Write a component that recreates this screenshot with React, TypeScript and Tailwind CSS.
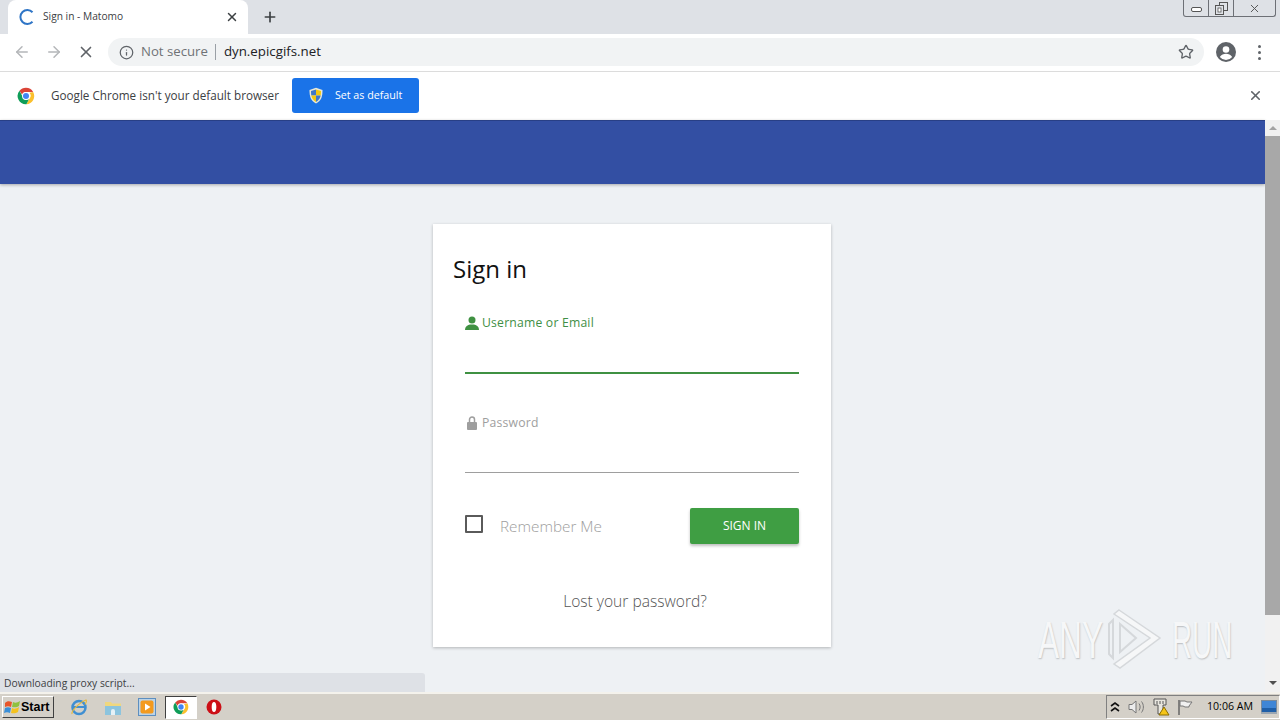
import { ArrowLeft, ArrowRight, X, Plus, Info, Star } from 'lucide-react';

function ChromeLogo({ size = 18 }: { size?: number }) {
  return (
    <svg width={size} height={size} viewBox="0 0 48 48">
      <path d="M24 2a22 22 0 0 1 19.05 11H24a11 11 0 0 0-10.4 7.4L6.6 10.2A22 22 0 0 1 24 2z" fill="#db4437" />
      <path d="M43.05 13A22 22 0 0 1 25 46l8.6-15.6A11 11 0 0 0 33 15.5z" fill="#fbc02d" />
      <path d="M25 46A22 22 0 0 1 6.6 10.2l9.4 17.6a11 11 0 0 0 11 5.8l5-1z" fill="#0f9d58" />
      <circle cx="24" cy="24" r="10.5" fill="#fff" />
      <circle cx="24" cy="24" r="8" fill="#4285f4" />
    </svg>
  );
}

function Shield() {
  return (
    <svg width="16" height="17" viewBox="0 0 16 17">
      <path d="M8 .8 14.5 3c0 6 -.8 10.500 -6.500 13.500C2.300 13.500 1.500 9 1.500 3z" fill="#e8e8d8" />
      <path d="M8 2.500V8.500H3.300C3.100 7 3 5 3 3.900z" fill="#3f78c9" />
      <path d="M8 2.500 13 3.900c0 1.600 -.1 3.200 -.3 4.600H8z" fill="#f2c811" />
      <path d="M3.300 8.500H8V15C5 13 3.800 11 3.300 8.500z" fill="#f2c811" />
      <path d="M8 8.500h4.700C12.200 11 11 13 8 15z" fill="#3f78c9" />
    </svg>
  );
}

function Taskbar() {
  return (
    <div className="flex h-[28px] items-center border-t-2 border-[#f4f2ec] bg-[#d4d0c8]">
      <button className="ml-[2px] flex h-[22px] w-[52px] items-center border border-t-white border-l-white border-r-[#404040] border-b-[#404040] bg-[#d4d0c8] pl-[1px] font-['Liberation_Sans',sans-serif] text-[12.500px] font-bold text-black">
        <svg width="17" height="16" viewBox="0 0 17 16" className="shrink-0">
          <path d="M1 4C3 2 5 2 8 3L7 8C5 7 3 7 1 8z" fill="#e8562a" />
          <path d="M9 3c2 1 4 1 7-1l-1 5c-2 1.500 -4 1.500 -7 1z" fill="#8fc13e" />
          <path d="M1 9c2-1 4-1 6 0l-1 5c-2-1-4-1-6 0z" fill="#3a8fd8" />
          <path d="M8 9c2 1 4 1 7-1l-1 5c-2 1.500 -5 1.500 -7 1z" fill="#f4c21f" />
        </svg>
        Start
      </button>
      <svg width="18" height="18" viewBox="0 0 18 18" className="ml-[16px]">
        <circle cx="9" cy="9.500" r="6.500" fill="none" stroke="#3f8fd2" strokeWidth="2.500" />
        <path d="M3 9h12" stroke="#3f8fd2" strokeWidth="2" />
        <path d="M2 16C1 13 10 4 16 2c1 1 0 3 -1 4.500" fill="none" stroke="#e6b93c" strokeWidth="1.200" />
      </svg>
      <svg width="18" height="18" viewBox="0 0 18 18" className="ml-[16px]">
        <path d="M1 4h6l1 1.500h9V9H1z" fill="#f0d77e" />
        <path d="M1 8h16v9H1z" fill="#8cc4de" />
        <path d="M7 17v-4a2 2 0 0 1 4 0v4z" fill="#e6f1f6" />
      </svg>
      <svg width="18" height="18" viewBox="0 0 18 18" className="ml-[16px]">
        <rect x="0.500" y="0.500" width="17" height="17" fill="#bcd3e6" stroke="#5d8fc0" />
        <rect x="2.500" y="2.500" width="13" height="13" rx="2" fill="#f39a1e" />
        <path d="M7 5.500 12.500 9 7 12.500z" fill="#fff" />
      </svg>
      <div className="ml-[9px] flex h-[23px] w-[32px] items-center justify-center border border-t-[#404040] border-l-[#404040] border-r-white border-b-white bg-white">
        <ChromeLogo size={16} />
      </div>
      <svg width="16" height="16" viewBox="0 0 16 16" className="ml-[9px]">
        <circle cx="8" cy="8" r="7.500" fill="#cc0f16" />
        <ellipse cx="8" cy="8" rx="2.300" ry="5" fill="#fff" />
      </svg>
      <div className="ml-auto flex h-[24px] w-[174px] items-center border border-t-[#808080] border-l-[#808080] border-r-white border-b-white text-black">
        <svg width="10" height="12" viewBox="0 0 10 12" className="ml-[3px]">
          <path d="M1 5 5 2l4 3M1 10l4-3 4 3" fill="none" stroke="#111" strokeWidth="1.600" />
        </svg>
        <svg width="18" height="16" viewBox="0 0 18 16" className="ml-[7px]">
          <path d="M2 5.500h3L9 2v12L5 10.500H2z" fill="#ececec" stroke="#777" />
          <path d="M12 4.500c1.500 2 1.500 5 0 7M14.500 2.500c2.500 3 2.500 8 0 11" fill="none" stroke="#777" />
        </svg>
        <svg width="18" height="18" viewBox="0 0 18 18" className="ml-[7px]">
          <path d="M2 1h12v6h-3v9H6V7H2z" fill="#e8e6df" stroke="#555" />
          <path d="M5 3v3M8 3v3M11 3v3" stroke="#555" />
          <path d="M12 9l5 8H7z" fill="#f5c518" stroke="#8a6d00" />
        </svg>
        <svg width="16" height="17" viewBox="0 0 16 17" className="ml-[7px]">
          <path d="M2 1v15" stroke="#666" strokeWidth="1.500" />
          <path d="M3 2h5l2 1h5l-3 4 0 1H8L6 7H3z" fill="#f1f1f1" stroke="#777" />
        </svg>
        <span className="ml-[14px] whitespace-nowrap text-[10.600px]">10:06 AM</span>
        <svg width="16" height="14" viewBox="0 0 16 14" className="ml-[8px]">
          <rect x="0.500" y="0.500" width="15" height="11" fill="#3f86d6" stroke="#7a8a9a" />
          <rect x="1" y="8" width="14" height="4" fill="#1f5fa8" />
          <rect x="0" y="12" width="16" height="2" fill="#9aa6b2" />
        </svg>
      </div>
    </div>
  );
}

function Scrollbar() {
  return (
    <div className="flex w-[15px] shrink-0 flex-col items-center bg-[#f1f1f1]">
      <div className="flex h-[16px] items-center justify-center">
        <div className="h-0 w-0 border-x-[4px] border-b-[4px] border-x-transparent border-b-[#a3a3a3]" />
      </div>
      <div className="h-[479px] w-full bg-[#a8a8a8]" />
      <div className="flex flex-1 items-end justify-center pb-[7px]">
        <div className="h-0 w-0 border-x-[4px] border-t-[4px] border-x-transparent border-t-[#505050]" />
      </div>
    </div>
  );
}

function Field({ label, active, icon }: { label: string; active?: boolean; icon: React.ReactNode }) {
  return (
    <div>
      <div className={`flex h-[20px] items-center text-[12.200px] tracking-[0.2px] ${active ? 'text-[#3f8f45]' : 'text-[#9e9e9e]'}`}>
        <span className="flex w-[17px] justify-start">{icon}</span>
        {label}
      </div>
      <div className={active ? 'mt-[39px] h-[2px] bg-[#3f9142]' : 'mt-[39px] h-[1px] bg-[#9e9e9e]'} />
    </div>
  );
}

export default function App() {
  return (
    <div className="flex h-[720px] w-[1280px] flex-col overflow-hidden bg-white font-['Open_Sans',sans-serif]">
      {/* tab strip */}
      <div className="flex h-[34px] shrink-0 bg-[#dee1e6]">
        <div className="ml-[8px] flex h-[34px] w-[240px] items-center rounded-t-[8px] bg-white pl-[11px] pr-[9px]">
          <svg width="16" height="16" viewBox="0 0 16 16">
            <path d="M13.500 3.200A7 7 0 1 0 13.500 12.800" fill="none" stroke="#2f75c6" strokeWidth="2" />
          </svg>
          <span className="ml-[8px] text-[10.200px] text-[#3c4043]">Sign in - Matomo</span>
          <X className="ml-auto text-[#3c4043]" size={14} strokeWidth={2.500} />
        </div>
        <Plus className="ml-[14px] mt-[9px] text-[#3c4043]" size={16} strokeWidth={2.500} />
        <div className="ml-auto mr-[4px] flex h-[17px] w-[93px] items-center rounded-b-[3px] border border-t-0 border-[#6d7076] text-[#555]">
          <div className="flex h-full w-[25px] items-center justify-center border-r border-[#6d7076]">
            <div className="mt-[3px] h-[5px] w-[11px] rounded-[2px] border border-[#555] bg-white" />
          </div>
          <div className="flex h-full w-[25px] items-center justify-center border-r border-[#6d7076]">
            <svg width="13" height="13" viewBox="0 0 13 13">
              <rect x="4.500" y="0.500" width="8" height="8" fill="#dee1e6" stroke="#555" />
              <rect x="0.500" y="3.500" width="8" height="9" fill="#dee1e6" stroke="#555" />
              <rect x="3" y="6" width="3" height="4" fill="white" stroke="#555" strokeWidth="0.800" />
            </svg>
          </div>
          <div className="flex flex-1 items-center justify-center">
            <X size={13} strokeWidth={1.800} />
          </div>
        </div>
      </div>

      {/* toolbar */}
      <div className="flex h-[38px] shrink-0 items-center border-b border-[#dcdcdc] bg-white pb-[1px]">
        <ArrowLeft className="ml-[13px] text-[#b4b6b9]" size={18} strokeWidth={2} />
        <ArrowRight className="ml-[14px] text-[#b4b6b9]" size={18} strokeWidth={2} />
        <X className="ml-[14px] text-[#5f6368]" size={18} strokeWidth={2.200} />
        <div className="ml-[13px] flex h-[28px] w-[1096px] items-center rounded-full bg-[#f1f3f4] pl-[11px] pr-[10px]">
          <Info className="text-[#5f6368]" size={15} strokeWidth={2} />
          <span className="ml-[7px] text-[13.200px] text-[#6f7276]">Not secure</span>
          <span className="ml-[7px] h-[16px] w-px bg-[#9aa0a6]" />
          <span className="ml-[8px] text-[13.300px] text-[#202124]">dyn.epicgifs.net</span>
          <Star className="ml-auto text-[#5f6368]" size={16} strokeWidth={2} />
        </div>
        <svg width="20" height="20" viewBox="0 0 20 20" className="ml-[12px]">
          <circle cx="10" cy="10" r="10" fill="#5f6368" />
          <circle cx="10" cy="7.500" r="3.300" fill="#fff" />
          <path d="M3.800 15c1.500-2.500 3.800-3.300 6.200-3.300s4.700.8 6.200 3.300a8 8 0 0 1-12.400 0z" fill="#fff" />
        </svg>
        <div className="ml-[22px] flex flex-col gap-[3px]">
          <span className="h-[3px] w-[3px] rounded-full bg-[#5f6368]" />
          <span className="h-[3px] w-[3px] rounded-full bg-[#5f6368]" />
          <span className="h-[3px] w-[3px] rounded-full bg-[#5f6368]" />
        </div>
      </div>

      {/* default browser infobar */}
      <div className="flex h-[48px] shrink-0 items-center bg-white pb-[1px]">
        <div className="ml-[17px] flex"><ChromeLogo /></div>
        <span className="ml-[16px] text-[11.700px] text-[#3c4043]">Google Chrome isn't your default browser</span>
        <button className="ml-[13px] flex h-[35px] w-[127px] items-center rounded-[3px] bg-[#1a73e8] pl-[16px] text-[10.700px] text-white">
          <Shield />
          <span className="ml-[11px]">Set as default</span>
        </button>
        <X className="ml-auto mr-[17px] text-[#5f6368]" size={15} strokeWidth={2.500} />
      </div>

      {/* page */}
      <div className="relative flex min-h-0 flex-1">
        <div className="flex flex-1 flex-col bg-[#eef1f4]">
          <div className="h-[64px] shrink-0 border-t border-[#283f86] bg-[#334fa3] shadow-[0_1px_3px_rgba(0,0,0,0.3)]" />
          <div className="ml-[433px] mt-[40px] h-[423px] w-[398px] bg-white px-[20px] pt-[27px] shadow-[0_1px_3px_rgba(0,0,0,0.25)]">
            <h1 className="text-[24px] leading-[36px] text-[#111]">Sign in</h1>
            <div className="mx-[12px] mt-[26px] w-[334px]">
              <Field
                label="Username or Email"
                active
                icon={
                  <svg width="14" height="14" viewBox="0 0 14 14">
                    <circle cx="7" cy="4" r="3.500" fill="#3f9142" />
                    <path d="M0 14c0-4 3-5 5-5.500h4c2 .5 5 1.500 5 5.500z" fill="#3f9142" />
                  </svg>
                }
              />
              <div className="mt-[39px]">
                <Field
                  label="Password"
                  icon={
                    <svg width="10" height="14" viewBox="0 0 10 14" className="ml-[2px]">
                      <path d="M2.500 6V3.500a2.500 2.500 0 0 1 5 0V6" fill="none" stroke="#9e9e9e" strokeWidth="1.500" />
                      <rect x="0" y="6" width="10" height="8" rx="1" fill="#9e9e9e" />
                    </svg>
                  }
                />
              </div>
              <div className="mt-[35px] flex items-center">
                <div className="mb-[4px] h-[18px] w-[18px] rounded-[1px] border-2 border-[#5a5a5a]" />
                <span className="ml-[17px] text-[15.300px] font-light text-[#9e9e9e]">Remember Me</span>
                <button className="ml-auto h-[36px] w-[109px] rounded-[2px] bg-[#3f9e43] text-[12px] text-white shadow-[0_2px_3px_rgba(0,0,0,0.25)]">
                  SIGN IN
                </button>
              </div>
            </div>
            <p className="ml-[6px] mt-[46px] text-center text-[15.600px] font-light text-[#555]">Lost your password?</p>
          </div>
        </div>
        <Scrollbar />

        {/* status bubble */}
        <div className="absolute bottom-0 left-0 flex h-[19px] w-[425px] items-center rounded-tr-[3px] bg-[#dee1e6] pl-[4px] pt-[2px] text-[10.300px] text-[#3c4043]">
          Downloading proxy script...
        </div>

        {/* watermark */}
        <div className="absolute left-[1038px] top-[488px] flex h-[64px] items-center font-['Liberation_Sans',sans-serif] text-[51px] leading-none text-[#f6f7f8] [text-shadow:1px_1px_2px_rgba(0,0,0,0.22)]">
          <span className="w-[70px] origin-left scale-x-[0.62]">ANY</span>
          <svg width="56" height="64" viewBox="0 0 56 64">
            <path d="M11 2 52 30 12 60 6 56 42 30 6 6z" fill="#f6f7f8" stroke="#d5d8db" strokeWidth="1.500" />
            <path d="M1 16v30l4 4V12zM12 16v28l16-14z" fill="none" stroke="#d5d8db" strokeWidth="2" />
          </svg>
          <span className="ml-[8px] w-[60px] origin-left scale-x-[0.545]">RUN</span>
        </div>
      </div>

      <Taskbar />
    </div>
  );
}
